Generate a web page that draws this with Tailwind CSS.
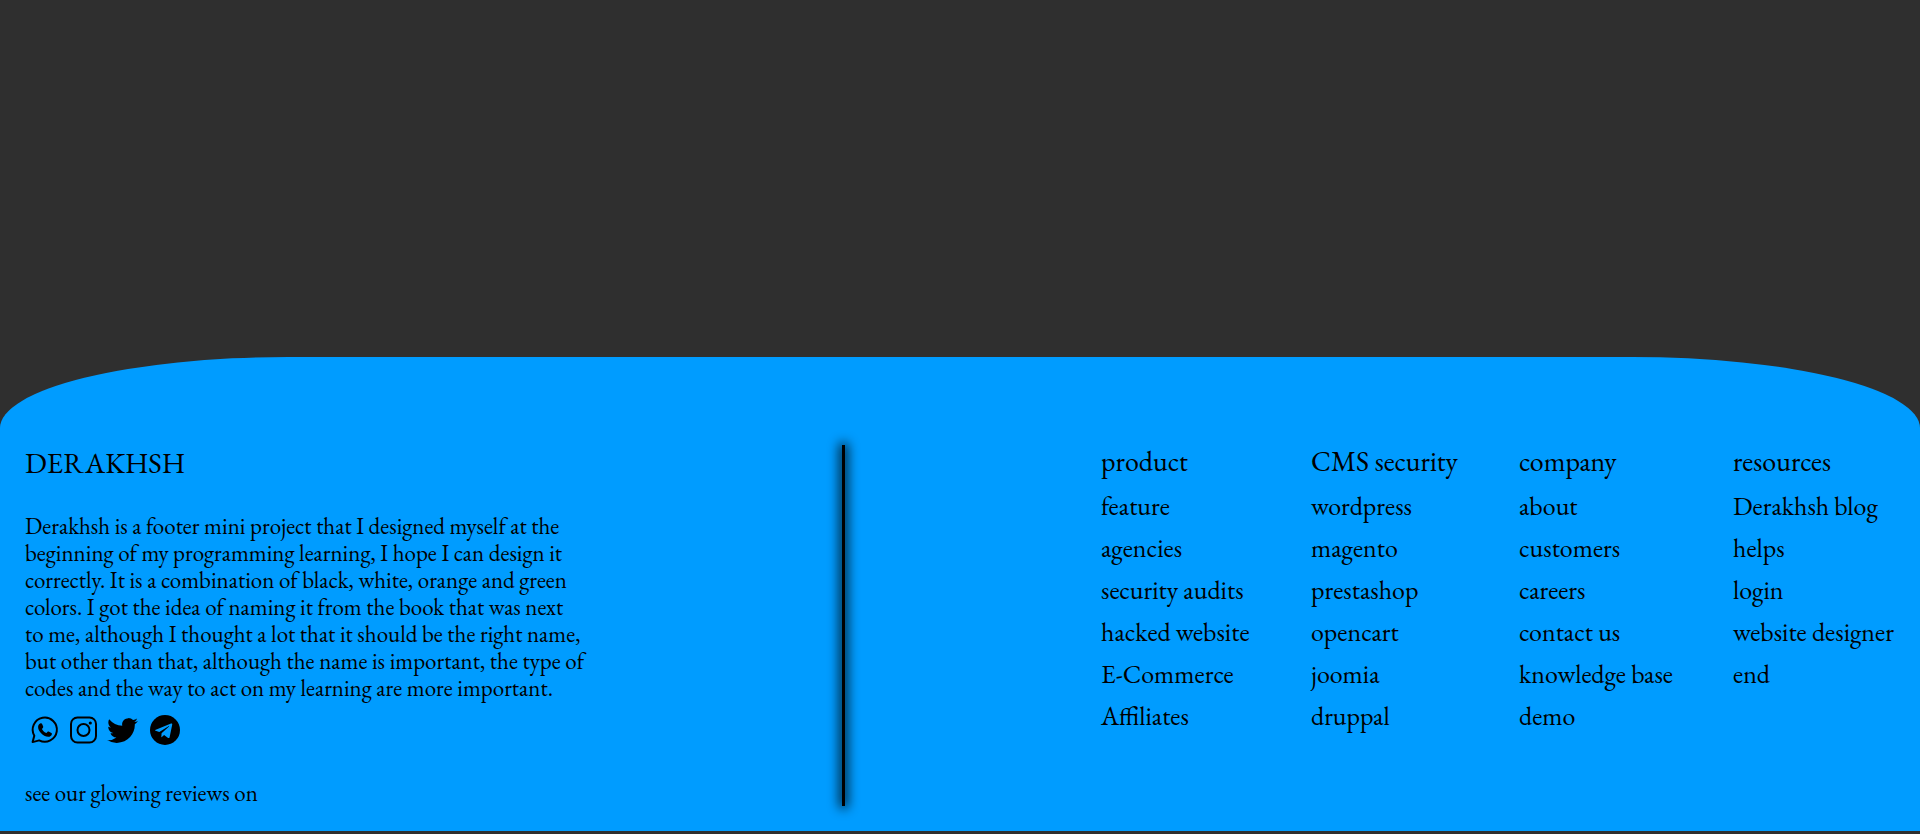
<!DOCTYPE html>
<html lang="en">
<head>
<meta charset="utf-8">
<meta name="viewport" content="width=device-width, initial-scale=1">
<title>Derakhsh</title>
<script src="https://cdn.jsdelivr.net/npm/@tailwindcss/browser@4"></script>
</head>
<body class="flex min-h-screen flex-col justify-end bg-[#2f2f2f] pb-[3px] font-['EB_Garamond','Liberation_Serif',serif] text-black">
<footer class="flex items-start justify-between rounded-t-[15%] bg-[#009cff] px-[25px] pt-[88px] pb-6">
  <section class="w-[581px]">
    <h2 class="text-[29px] leading-[36px]">DERAKHSH</h2>
    <p class="mt-8 text-[23px] leading-[27px] whitespace-nowrap">Derakhsh is a footer mini project that I designed myself at the<br>beginning of my programming learning, I hope I can design it<br>correctly. It is a combination of black, white, orange and green<br>colors. I got the idea of naming it from the book that was next<br>to me, although I thought a lot that it should be the right name,<br>but other than that, although the name is important, the type of<br>codes and the way to act on my learning are more important.</p>
    <div class="mt-[11px] flex h-[34px] items-center gap-[9px] pl-[5px]">
      <a href="#" aria-label="WhatsApp"><svg class="h-[30px] w-[30px]" viewBox="0 0 30 30" fill="none"><path d="M2.6 27.1 4.3 20.7A12.1 12.1 0 1 1 9.2 25.4Z" stroke="#000" stroke-width="2" stroke-linejoin="round"/><path d="M10.6 8.3c.5-.2 1.1-.1 1.4.5l1.2 2.8c.2.5-.1.9-.4 1.3l-.9 1c1 2 2.5 3.3 4.6 4.2l1.1-1.3c.3-.4.7-.4 1.1-.2l2.7 1.3c.5.2.6.5.5 1-.2 1.8-1.9 2.900-3.600 2.900-2.700 0-5.500-1.800-7.400-3.900-1.700-1.900-3-4.100-2.800-6.200.1-1.500 1.200-2.900 2.500-3.400Z" fill="#000"/></svg></a>
      <a href="#" aria-label="Instagram"><svg class="h-[28px] w-[28px]" viewBox="0 0 28 28" fill="none" stroke="#000" stroke-width="2"><rect x="2" y="1.500" width="25" height="25" rx="6.500"/><circle cx="14.500" cy="14" r="6"/><circle cx="21.300" cy="7" r="1.600" fill="#000" stroke="none"/></svg></a>
      <a href="#" aria-label="Twitter"><svg class="h-[33px] w-[33px]" viewBox="0 0 512 512"><path d="M496 109.500a201.800 201.800 0 0 1-56.550 15.300 97.510 97.510 0 0 0 43.330-53.600 197.740 197.740 0 0 1-62.560 23.500A99.140 99.140 0 0 0 348.310 64c-54.420 0-98.460 43.400-98.460 96.900a93.210 93.210 0 0 0 2.540 22.100 280.700 280.700 0 0 1-203-101.300A95.690 95.690 0 0 0 36 130.400c0 33.600 17.530 63.300 44 80.700A97.500 97.500 0 0 1 35.220 199v1.200c0 47 34 86.100 79 95a100.760 100.760 0 0 1-25.940 3.400 94.380 94.380 0 0 1-18.510-1.800c12.510 38.500 48.920 66.500 92.050 67.300A199.590 199.590 0 0 1 39.500 405.600a203 203 0 0 1-23.500-1.400A278.680 278.680 0 0 0 166.740 448c181.360 0 280.440-147.700 280.440-275.800 0-4.200-.11-8.400-.31-12.500A198.480 198.480 0 0 0 496 109.500Z"/></svg></a>
      <a href="#" class="pl-[2px]" aria-label="Telegram"><svg class="h-[30px] w-[30px]" viewBox="0 0 30 30"><circle cx="15" cy="15" r="15"/><path d="M5.800 14.700 21 8.600c.8-.3 1.400.1 1.200 1.100l-2.600 12.500c-.2.900-.8 1.100-1.500.7l-4-3-2 1.900c-.3.300-.5.500-.8.400l.3-4 7.400-6.800c.3-.3-.1-.4-.5-.2L9.300 17l-3.700-1.200c-.8-.3-.8-.8.2-1.100Z" fill="#009cff"/></svg></a>
    </div>
    <p class="mt-8 text-[23px] leading-[28px]">see our glowing reviews on</p>
  </section>
  <div class="h-[361px] w-[3px] bg-black shadow-[0_0_12px_2px_#000]"></div>
  <nav class="grid grid-cols-[210px_208px_214px_162px] pl-5 text-[26px] leading-[34px] whitespace-nowrap">
    <section><h3 class="mb-3 text-[28px] leading-[32px]">product</h3><ul class="flex flex-col gap-2"><li><a href="#">feature</a></li><li><a href="#">agencies</a></li><li><a href="#">security audits</a></li><li><a href="#">hacked website</a></li><li><a href="#">E-Commerce</a></li><li><a href="#">Affiliates</a></li></ul></section>
    <section><h3 class="mb-3 text-[28px] leading-[32px]">CMS security</h3><ul class="flex flex-col gap-2"><li><a href="#">wordpress</a></li><li><a href="#">magento</a></li><li><a href="#">prestashop</a></li><li><a href="#">opencart</a></li><li><a href="#">joomia</a></li><li><a href="#">druppal</a></li></ul></section>
    <section><h3 class="mb-3 text-[28px] leading-[32px]">company</h3><ul class="flex flex-col gap-2"><li><a href="#">about</a></li><li><a href="#">customers</a></li><li><a href="#">careers</a></li><li><a href="#">contact us</a></li><li><a href="#">knowledge base</a></li><li><a href="#">demo</a></li></ul></section>
    <section><h3 class="mb-3 text-[28px] leading-[32px]">resources</h3><ul class="flex flex-col gap-2"><li><a href="#">Derakhsh blog</a></li><li><a href="#">helps</a></li><li><a href="#">login</a></li><li><a href="#">website designer</a></li><li><a href="#">end</a></li></ul></section>
  </nav>
</footer>
</body>
</html>
